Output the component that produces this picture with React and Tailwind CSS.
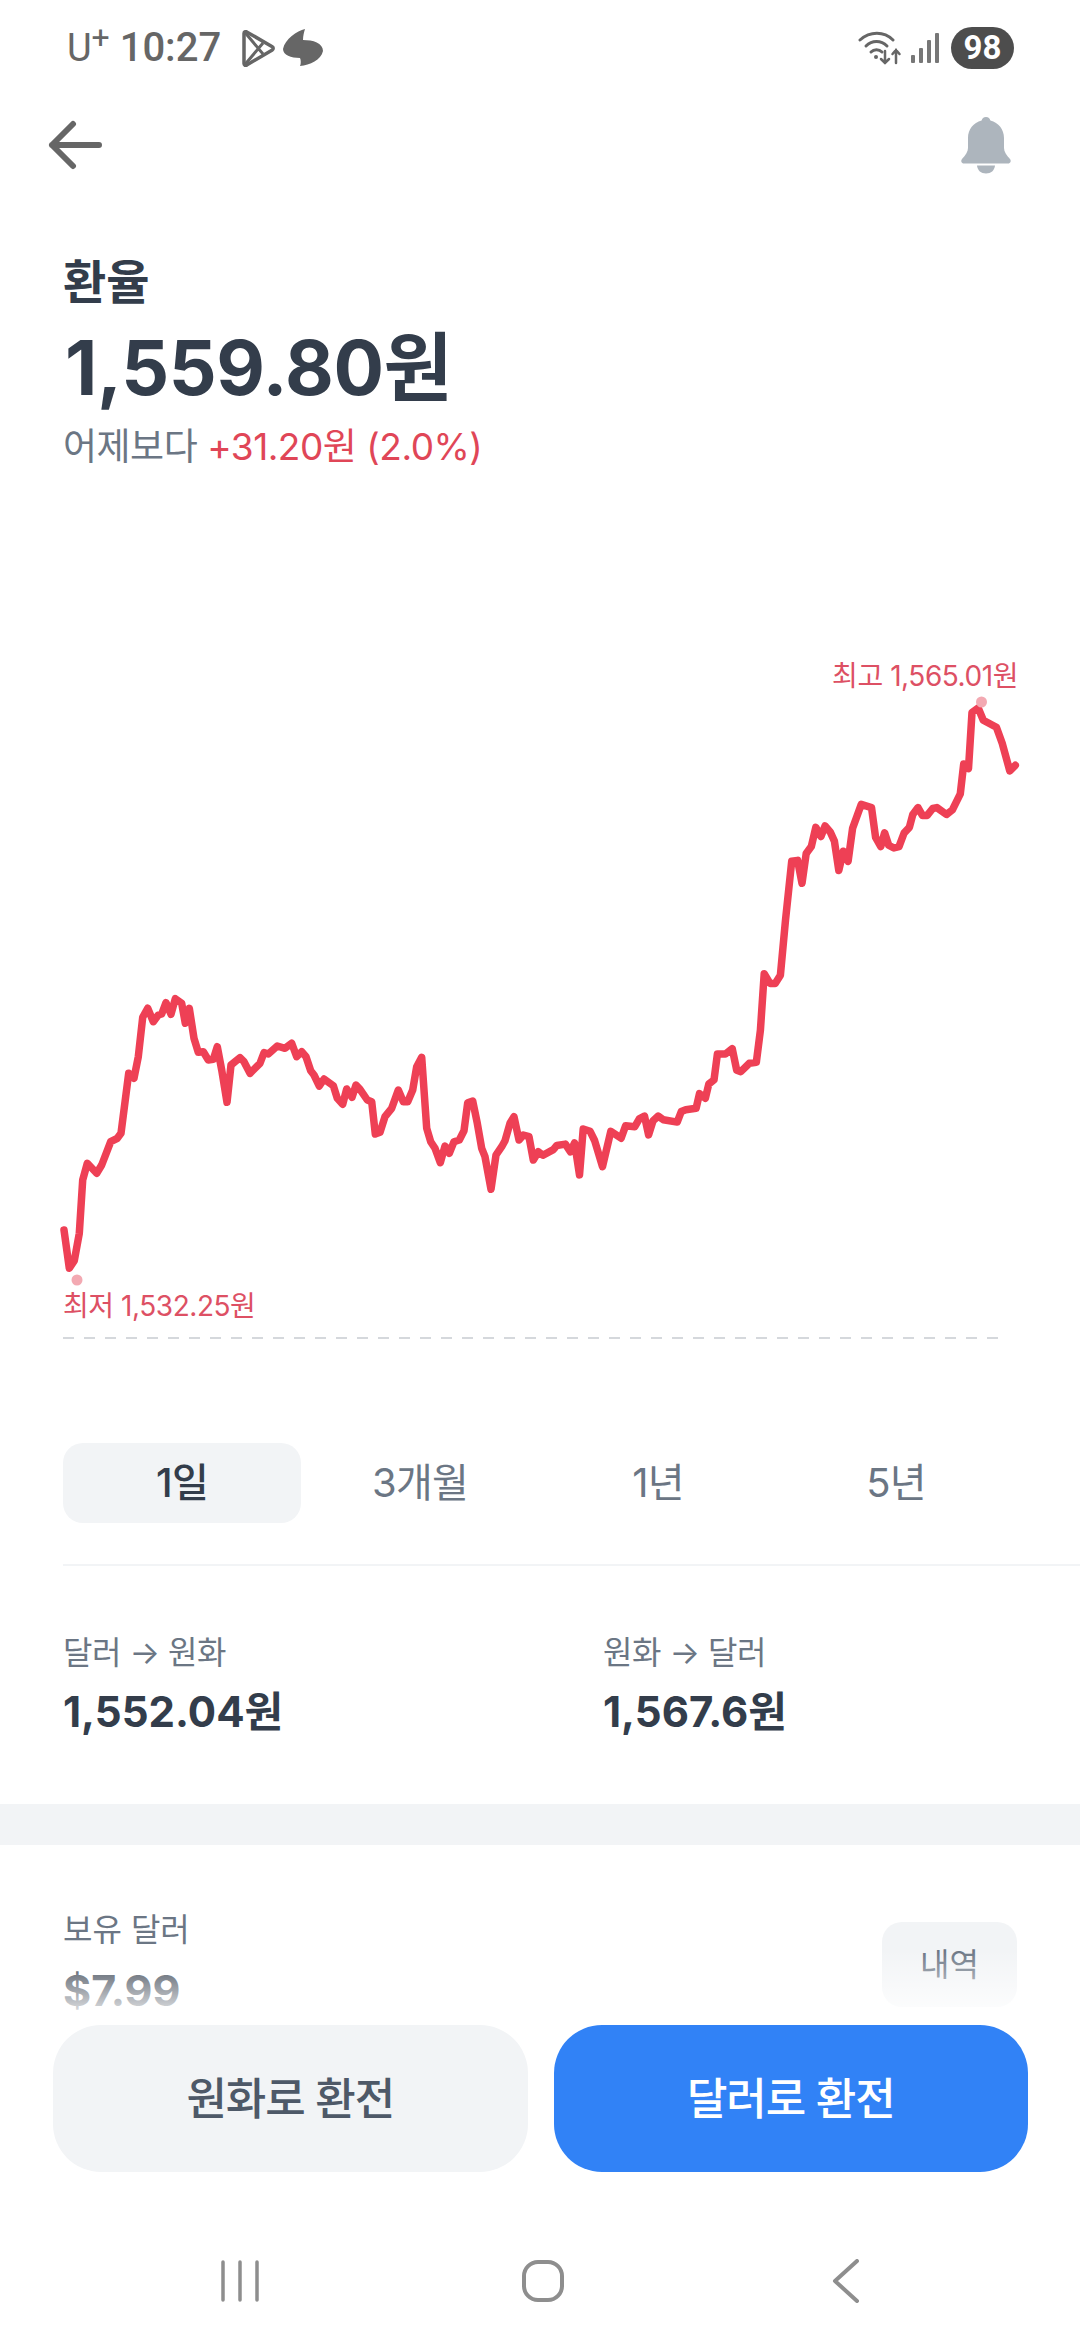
// chart points read off the reference, in full page pixels
const left = [[72,990],[88,1105],[103,1082],[118,1000],[128,840],[142,790],[170,820],[185,795],[212,725],[232,715],[243,700],[266,520],[282,535],[295,470],[308,352],[323,325],[340,365],[355,345],[365,342],[378,308],[393,343],[406,296],[425,310],[436,370],[448,325],[462,415],[475,457],[490,455],[505,480],[520,478],[532,440],[545,510],[561,607],[573,495],[600,473],[612,485],[630,520],[660,490],[672,458],[685,462],[712,438],[735,445],[755,430],[770,470],[785,455],[798,470],[812,512],[822,525],[838,558],[852,537],[880,557],[892,595],[908,613],[920,567],[936,592],[948,555],[960,568],[982,600],[995,605],[1006,702],[1020,697],[1035,650],[1055,625],[1075,570],[1090,605],[1103,605],[1118,570],[1130,500],[1145,472],[1160,685],[1172,725],[1185,745],[1201,788],[1215,738],[1228,760],[1242,725],[1258,720],[1272,692],[1283,608],[1298,603],[1312,670],[1325,745],[1335,770],[1353,868],[1368,765],[1385,740],[1395,722],[1410,670],[1422,650],[1437,720],[1450,705],[1467,710],[1480,780],[1495,755]];
const right = [[125,1122],[155,1110],[165,1101],[190,1098],[205,1115],[217,1095],[231,1165],[242,1065],[262,1070],[275,1090],[298,1147],[322,1070],[352,1085],[365,1058],[392,1060],[405,1043],[420,1037],[432,1078],[445,1047],[460,1037],[475,1045],[515,1050],[527,1027],[540,1023],[570,1020],[580,988],[597,998],[607,967],[622,958],[632,902],[655,902],[675,890],[688,937],[700,940],[725,922],[745,920],[757,850],[768,727],[785,748],[800,748],[815,730],[830,610],[848,482],[865,480],[878,530],[890,465],[905,450],[918,408],[933,428],[945,405],[960,418],[972,438],[985,502],[998,460],[1012,482],[1025,410],[1050,358],[1080,365],[1092,430],[1107,450],[1118,420],[1130,447],[1145,453],[1160,450],[1175,420],[1190,408],[1200,380],[1215,365],[1228,382],[1242,382],[1258,367],[1270,365],[1298,380],[1315,370],[1338,335],[1348,270],[1362,280],[1372,158],[1390,148],[1405,175],[1443,190],[1460,225],[1482,285],[1498,273]];
const linePoints = [
  ...left.map(([x, y]) => [x / 3 + 40, y / 3 + 900]),
  ...right.map(([x, y]) => [x / 2.907 + 500, y / 2.178 + 640]),
]
  .map(([x, y]) => `${x.toFixed(1)},${y.toFixed(1)}`)
  .join(" ");

const tabs = ["1일", "3개월", "1년", "5년"];

const PlayIcon = () => (
  <svg width="33" height="37" viewBox="0 0 33 37" fill="none" stroke="#666" strokeWidth="3.500" strokeLinejoin="round">
    <path d="M2 3.500c0-1.500 1.400-2.300 2.700-1.600l25.600 14.800c1.200.7 1.200 2.500 0 3.200L4.700 35.100C3.400 35.800 2 35 2 33.500z" />
    <path d="M3 2.500 21 24M3 34.500 21 13" strokeWidth="3" />
  </svg>
);

const BlobIcon = () => (
  <svg width="40" height="38" viewBox="0 0 40 38" fill="#666">
    <path d="M22 0C14 2 2 10 0 20c0 6 8 9 17 9 1 2 1 6 0 8 10-1 21-6 23-15 0-8-10-11-20-11 0-4 1-8 2-11z" />
  </svg>
);

const BackArrow = () => (
  <svg width="56" height="50" viewBox="0 0 56 50" fill="none" stroke="#666" strokeWidth="6" strokeLinecap="round" strokeLinejoin="round">
    <path d="M52 25H5M26 4 5 25l21 21" />
  </svg>
);

const StatusIcons = () => (
  <div className="flex items-center">
    <svg width="44" height="34" viewBox="0 0 44 34" fill="none" stroke="#666" strokeWidth="3" strokeLinecap="round">
      <path d="M2 9C12 0 26 0 35 9" />
      <path d="M8 15c6-6 15-6 21 0" />
      <path d="M13 21c3-3 8-3 11 0" />
      <circle cx="18" cy="26" r="2" fill="#666" stroke="none" />
      <path d="M27 20v12M23 28l4 4 4-4" strokeWidth="2.500" />
      <path d="M38 32V19M34.500 23l3.500-4 3.500 4" strokeWidth="2.500" />
    </svg>
    <svg className="ml-[9px]" width="30" height="32" viewBox="0 0 30 32" fill="#777">
      <rect x="0" y="23" width="4" height="8" rx="1" />
      <rect x="8" y="16" width="4" height="15" rx="1" />
      <rect x="16" y="8" width="4" height="23" rx="1" />
      <rect x="24" y="1" width="4" height="30" rx="1" />
    </svg>
    <div className="ml-[10px] flex h-[42px] w-[63px] items-center justify-center rounded-full bg-[#4d4d4d] font-['Roboto',sans-serif] text-[33px] font-bold text-white">
      98
    </div>
  </div>
);

const Bell = () => (
  <svg width="52" height="58" viewBox="0 0 52 58" fill="#adb5bd">
    <path d="M26 1c2.500 0 4 1.600 4.400 3.600C38.600 6.700 44 13.500 44 22v10c0 4 2.500 7 6 11 1.500 1.800.6 4.500-2 4.500H4C1.400 47.500.5 44.800 2 43c3.500-4 6-7 6-11V22C8 13.500 13.400 6.700 21.600 4.600 22 2.600 23.500 1 26 1z" />
    <path d="M17 49.500h18C34.500 54.500 31 57.500 26 57.500S17.500 54.500 17 49.500z" />
  </svg>
);

export default function App() {
  return (
    <div className="relative h-[2340px] w-[1080px] overflow-hidden bg-white font-['Inter','Noto_Sans_CJK_KR',sans-serif] text-[#333d4b]">
      <header className="flex h-[96px] items-center justify-between pl-[67px] pr-[66px]">
        <div className="flex items-center font-['Roboto','Noto_Sans_CJK_KR',sans-serif] text-[38px] leading-none text-[#666]">
          <span className="relative pr-[18px]">
            U<span className="absolute -top-[8px] right-0 text-[32px]">+</span>
          </span>
          <span className="ml-[10px] text-[40px] font-medium">10:27</span>
          <span className="ml-[21px] flex items-center gap-[8px]">
            <PlayIcon />
            <BlobIcon />
          </span>
        </div>
        <StatusIcons />
      </header>

      <nav className="flex h-[98px] items-center justify-between pl-[47px] pr-[68px]">
        <BackArrow />
        <Bell />
      </nav>

      <section className="px-[63px] pt-[62px]">
        <h1 className="text-[47px] font-bold leading-[52px]">환율</h1>
        <div className="mt-[15px] pl-[2px] text-[75px] font-bold leading-[90px] tracking-[-0.005em]">1,559.80원</div>
        <div className="mt-[10px] text-[37px] leading-[48px] tracking-[-0.013em] text-[#6b7684]">
          어제보다 <span className="text-[#e04657]">+31.20원 (2.0%)</span>
        </div>
      </section>

      <section className="relative mt-[169px] h-[700px]">
        <svg className="h-[700px] w-[1080px]" viewBox="0 640 1080 700">
          <polyline points={linePoints} fill="none" stroke="#ee4055" strokeWidth="7.500" strokeLinejoin="round" strokeLinecap="round" />
          <circle cx="981.500" cy="702" r="5.500" fill="#f3a9b2" />
          <circle cx="77" cy="1280" r="5.500" fill="#f3a9b2" />
          <line x1="63" x2="1000" y1="1338" y2="1338" stroke="#d5d8dc" strokeWidth="2" strokeDasharray="11 10" />
        </svg>
        <div className="absolute right-[62px] top-[16px] text-[28px] leading-[40px] tracking-[-0.016em] text-[#dd5064]">최고 1,565.01원</div>
        <div className="absolute left-[63px] top-[646px] text-[28px] leading-[40px] tracking-[-0.016em] text-[#dd5064]">최저 1,532.25원</div>
      </section>

      <div className="mt-[103px] grid grid-cols-4 pl-[63px] pr-[65px]">
        {tabs.map((tab, i) => (
          <div
            key={tab}
            className={
              i === 0
                ? "flex h-[80px] items-center justify-center rounded-[20px] bg-[#f2f4f6] text-[40px] font-medium tracking-[-0.02em] text-[#333d4b]"
                : "flex h-[80px] items-center justify-center text-[40px] tracking-[-0.02em] text-[#6b7684]"
            }
          >
            {tab}
          </div>
        ))}
      </div>

      <div className="ml-[63px] mt-[41px] h-[2px] bg-[#f2f4f6]" />

      <section className="flex h-[238px] px-[63px] pt-[63px]">
        <div className="w-[540px]">
          <div className="text-[32px] leading-[48px] tracking-[-0.015em] text-[#6b7684]">달러 → 원화</div>
          <div className="mt-[7px] text-[42px] font-bold leading-[56px]">1,552.04원</div>
        </div>
        <div>
          <div className="text-[32px] leading-[48px] tracking-[-0.015em] text-[#6b7684]">원화 → 달러</div>
          <div className="mt-[7px] text-[42px] font-bold leading-[56px]">1,567.6원</div>
        </div>
      </section>

      <div className="h-[41px] bg-[#f2f4f6]" />

      <section className="flex items-start justify-between pl-[63px] pr-[63px] pt-[61px]">
        <div>
          <div className="text-[32px] leading-[48px] text-[#6b7684]">보유 달러</div>
          <div className="mt-[8px] text-[43px] font-bold leading-[56px] text-[#333d4b]">$7.99</div>
        </div>
        <div className="mt-[16px] flex h-[85px] w-[135px] items-center justify-center rounded-[20px] bg-[#f2f4f6] text-[32px] text-[#6b7684]">
          내역
        </div>
      </section>

      {/* bottom action bar sits over the scrolling content */}
      <div className="absolute bottom-0 left-0 w-full">
        <div className="h-[75px] bg-gradient-to-b from-white/0 to-white" />
        <div className="h-[315px] bg-white">
          <div className="flex gap-[26px] pl-[53px] pr-[52px]">
            <button className="h-[147px] flex-1 rounded-[48px] bg-[#f2f4f6] text-[44px] font-medium tracking-[-0.025em] text-[#4e5968]">원화로 환전</button>
            <button className="h-[147px] flex-1 rounded-[48px] bg-[#3182f6] text-[44px] font-medium tracking-[-0.025em] text-white">달러로 환전</button>
          </div>
          <div className="mt-[87px] flex items-center justify-between pl-[220px] pr-[220px]">
            <svg width="40" height="42" viewBox="0 0 40 42" stroke="#8e8e8e" strokeWidth="3.500" strokeLinecap="round">
              <path d="M3 2v38M20 2v38M37 2v38" />
            </svg>
            <svg className="mr-[6px]" width="44" height="44" viewBox="0 0 44 44" fill="none" stroke="#8e8e8e" strokeWidth="4">
              <rect x="3" y="3" width="38" height="38" rx="14" />
            </svg>
            <svg width="28" height="44" viewBox="0 0 28 44" fill="none" stroke="#8e8e8e" strokeWidth="4" strokeLinecap="round" strokeLinejoin="round">
              <path d="M25 2 3 22l22 20" />
            </svg>
          </div>
        </div>
      </div>
    </div>
  );
}
